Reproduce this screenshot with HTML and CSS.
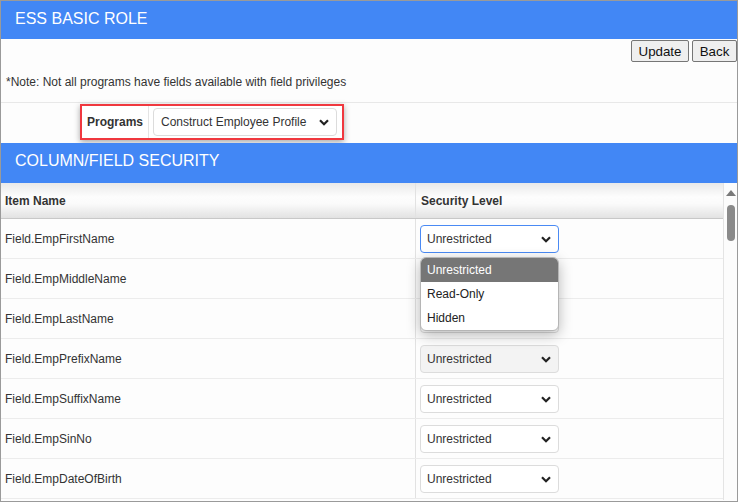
FILE: index.html
```html
<!DOCTYPE html>
<html lang="en">
<head>
  <meta charset="UTF-8">
  <title>ESS Basic Role</title>
  <link rel="stylesheet" href="styles.css">
</head>
<body>
  <div class="page">
    <div class="panel-header">ESS BASIC ROLE</div>

    <div class="toolbar">
      <button class="btn btn-update">Update</button>
      <button class="btn btn-back">Back</button>
    </div>

    <div class="note">*Note: Not all programs have fields available with field privileges</div>

    <div class="program-row">
      <div class="program-box">
        <label class="program-label" for="program">Programs</label>
        <div class="select-wrap program-select">
          <select id="program">
            <option>Construct Employee Profile</option>
          </select>
          <svg class="chevron" width="10" height="7" viewBox="0 0 10 7"><path d="M1 1.2 L5 5.2 L9 1.2" fill="none" stroke="#222" stroke-width="2.2"/></svg>
        </div>
      </div>
    </div>

    <div class="panel-header section">COLUMN/FIELD SECURITY</div>

    <div class="grid-area">
      <table class="security-table">
        <thead>
          <tr>
            <th class="col-name">Item Name</th>
            <th class="col-level">Security Level</th>
          </tr>
        </thead>
        <tbody>
          <tr>
            <td class="col-name">Field.EmpFirstName</td>
            <td class="col-level">
              <div class="select-wrap level-select focused">
                <select><option>Unrestricted</option><option>Read-Only</option><option>Hidden</option></select>
                <svg class="chevron" width="10" height="7" viewBox="0 0 10 7"><path d="M1 1.2 L5 5.2 L9 1.2" fill="none" stroke="#222" stroke-width="2.2"/></svg>
                <ul class="option-list">
                  <li class="active">Unrestricted</li>
                  <li>Read-Only</li>
                  <li>Hidden</li>
                </ul>
              </div>
            </td>
          </tr>
          <tr>
            <td class="col-name">Field.EmpMiddleName</td>
            <td class="col-level">
              <div class="select-wrap level-select">
                <select><option>Unrestricted</option><option>Read-Only</option><option>Hidden</option></select>
                <svg class="chevron" width="10" height="7" viewBox="0 0 10 7"><path d="M1 1.2 L5 5.2 L9 1.2" fill="none" stroke="#222" stroke-width="2.2"/></svg>
              </div>
            </td>
          </tr>
          <tr>
            <td class="col-name">Field.EmpLastName</td>
            <td class="col-level">
              <div class="select-wrap level-select">
                <select><option>Unrestricted</option><option>Read-Only</option><option>Hidden</option></select>
                <svg class="chevron" width="10" height="7" viewBox="0 0 10 7"><path d="M1 1.2 L5 5.2 L9 1.2" fill="none" stroke="#222" stroke-width="2.2"/></svg>
              </div>
            </td>
          </tr>
          <tr>
            <td class="col-name">Field.EmpPrefixName</td>
            <td class="col-level">
              <div class="select-wrap level-select shaded">
                <select><option>Unrestricted</option><option>Read-Only</option><option>Hidden</option></select>
                <svg class="chevron" width="10" height="7" viewBox="0 0 10 7"><path d="M1 1.2 L5 5.2 L9 1.2" fill="none" stroke="#222" stroke-width="2.2"/></svg>
              </div>
            </td>
          </tr>
          <tr>
            <td class="col-name">Field.EmpSuffixName</td>
            <td class="col-level">
              <div class="select-wrap level-select">
                <select><option>Unrestricted</option><option>Read-Only</option><option>Hidden</option></select>
                <svg class="chevron" width="10" height="7" viewBox="0 0 10 7"><path d="M1 1.2 L5 5.2 L9 1.2" fill="none" stroke="#222" stroke-width="2.2"/></svg>
              </div>
            </td>
          </tr>
          <tr>
            <td class="col-name">Field.EmpSinNo</td>
            <td class="col-level">
              <div class="select-wrap level-select">
                <select><option>Unrestricted</option><option>Read-Only</option><option>Hidden</option></select>
                <svg class="chevron" width="10" height="7" viewBox="0 0 10 7"><path d="M1 1.2 L5 5.2 L9 1.2" fill="none" stroke="#222" stroke-width="2.2"/></svg>
              </div>
            </td>
          </tr>
          <tr>
            <td class="col-name">Field.EmpDateOfBirth</td>
            <td class="col-level">
              <div class="select-wrap level-select">
                <select><option>Unrestricted</option><option>Read-Only</option><option>Hidden</option></select>
                <svg class="chevron" width="10" height="7" viewBox="0 0 10 7"><path d="M1 1.2 L5 5.2 L9 1.2" fill="none" stroke="#222" stroke-width="2.2"/></svg>
              </div>
            </td>
          </tr>
        </tbody>
      </table>

      <div class="scrollbar">
        <div class="scroll-up"></div>
        <div class="scroll-thumb"></div>
      </div>
    </div>
  </div>
</body>
</html>
```

FILE: styles.css
```css
body {
  margin: 0;
  font-family: "Liberation Sans", Arial, sans-serif;
  color: #333;
  background: #fff;
}
.page {
  width: 738px;
  height: 502px;
  box-sizing: border-box;
  border: 1px solid #9a9a9a;
  background: #fdfdfd;
  overflow: hidden;
}
.panel-header {
  height: 38px;
  line-height: 36px;
  padding-left: 14px;
  background: #4287f5;
  color: #fff;
  font-size: 16px;
}
.panel-header.section {
  height: 40px;
  line-height: 36px;
}
.toolbar {
  display: flex;
  justify-content: flex-end;
  gap: 3px;
  padding-top: 1px;
  height: 22px;
}
.btn {
  height: 22px;
  padding: 0;
  font-family: "Liberation Sans", Arial, sans-serif;
  font-size: 13.33px;
  color: #111;
  background: #efefef;
  border: 1px solid #767676;
  border-radius: 2px;
}
.btn-update {
  width: 58px;
}
.btn-back {
  width: 45px;
}
.note {
  height: 27px;
  padding-top: 13px;
  padding-left: 5px;
  font-size: 12px;
  line-height: 14px;
  color: #333;
  border-bottom: 1px solid #e8e8e8;
}
.program-row {
  height: 40px;
  padding-top: 1px;
  box-sizing: border-box;
}
.program-box {
  display: flex;
  align-items: center;
  margin-left: 79px;
  width: 264px;
  height: 36px;
  box-sizing: border-box;
  border: 2px solid #f0383f;
  box-shadow: 0 2px 6px rgba(0, 0, 0, 0.35);
  background: #fff;
}
.program-label {
  align-self: stretch;
  display: flex;
  align-items: center;
  width: 61px;
  padding-left: 5px;
  font-size: 12px;
  font-weight: bold;
  color: #333;
  border-right: 1px solid #e4e4e4;
}
.select-wrap {
  position: relative;
}
.select-wrap select {
  display: block;
  width: 100%;
  height: 28px;
  box-sizing: border-box;
  padding: 0 0 0 6px;
  font-family: "Liberation Sans", Arial, sans-serif;
  font-size: 12px;
  color: #333;
  background: #fff;
  border: 1px solid #dcdcdc;
  border-radius: 4px;
  appearance: none;
  -webkit-appearance: none;
  outline: none;
}
.program-select {
  width: 184px;
  margin-left: 4px;
}
.program-select select {
  padding-left: 7px;
}
.chevron {
  position: absolute;
  right: 8px;
  top: 11px;
  pointer-events: none;
}
.grid-area {
  display: flex;
  height: 317px;
}
.security-table {
  width: 722px;
  border-collapse: collapse;
  font-size: 12px;
  align-self: flex-start;
}
.security-table th {
  height: 35px;
  padding: 0;
  text-align: left;
  font-weight: bold;
  color: #333;
  background: linear-gradient(#e9e9e9, #fdfdfd 40%, #fafafa 60%, #e2e2e2);
  border-bottom: 1px solid #c8c8c8;
}
.security-table td {
  height: 39px;
  padding: 0;
  border-bottom: 1px solid #ececec;
}
.col-name {
  width: 410px;
  padding-left: 4px !important;
}
.col-level {
  border-left: 1px solid #e2e2e2;
  padding-left: 4px !important;
}
.security-table th.col-level {
  padding-left: 5px !important;
}
.level-select {
  width: 139px;
}
.level-select.focused select {
  border-color: #4a8af4;
}
.level-select.shaded select {
  background: #f3f3f3;
}
.option-list {
  position: absolute;
  left: 0;
  top: 32px;
  width: 139px;
  margin: 0;
  padding: 0;
  list-style: none;
  background: #fff;
  border: 1px solid #b5b5b5;
  border-radius: 6px;
  box-sizing: border-box;
  overflow: hidden;
  box-shadow: 0 4px 14px rgba(0, 0, 0, 0.28);
  z-index: 2;
}
.option-list li {
  height: 24px;
  line-height: 24px;
  padding-left: 6px;
  font-size: 12px;
  color: #222;
}
.option-list li.active {
  background: #767676;
  color: #fff;
}
.scrollbar {
  width: 14px;
  box-sizing: border-box;
  border-left: 1px solid #e4e4e4;
  background: #fcfcfc;
  position: relative;
}
.scroll-up {
  width: 0;
  height: 0;
  margin: 7px auto 0;
  border-left: 5px solid transparent;
  border-right: 5px solid transparent;
  border-bottom: 6px solid #7a7a7a;
}
.scroll-thumb {
  width: 8px;
  height: 36px;
  margin: 9px auto 0;
  border-radius: 4px;
  background: #8a8a8a;
}
```
